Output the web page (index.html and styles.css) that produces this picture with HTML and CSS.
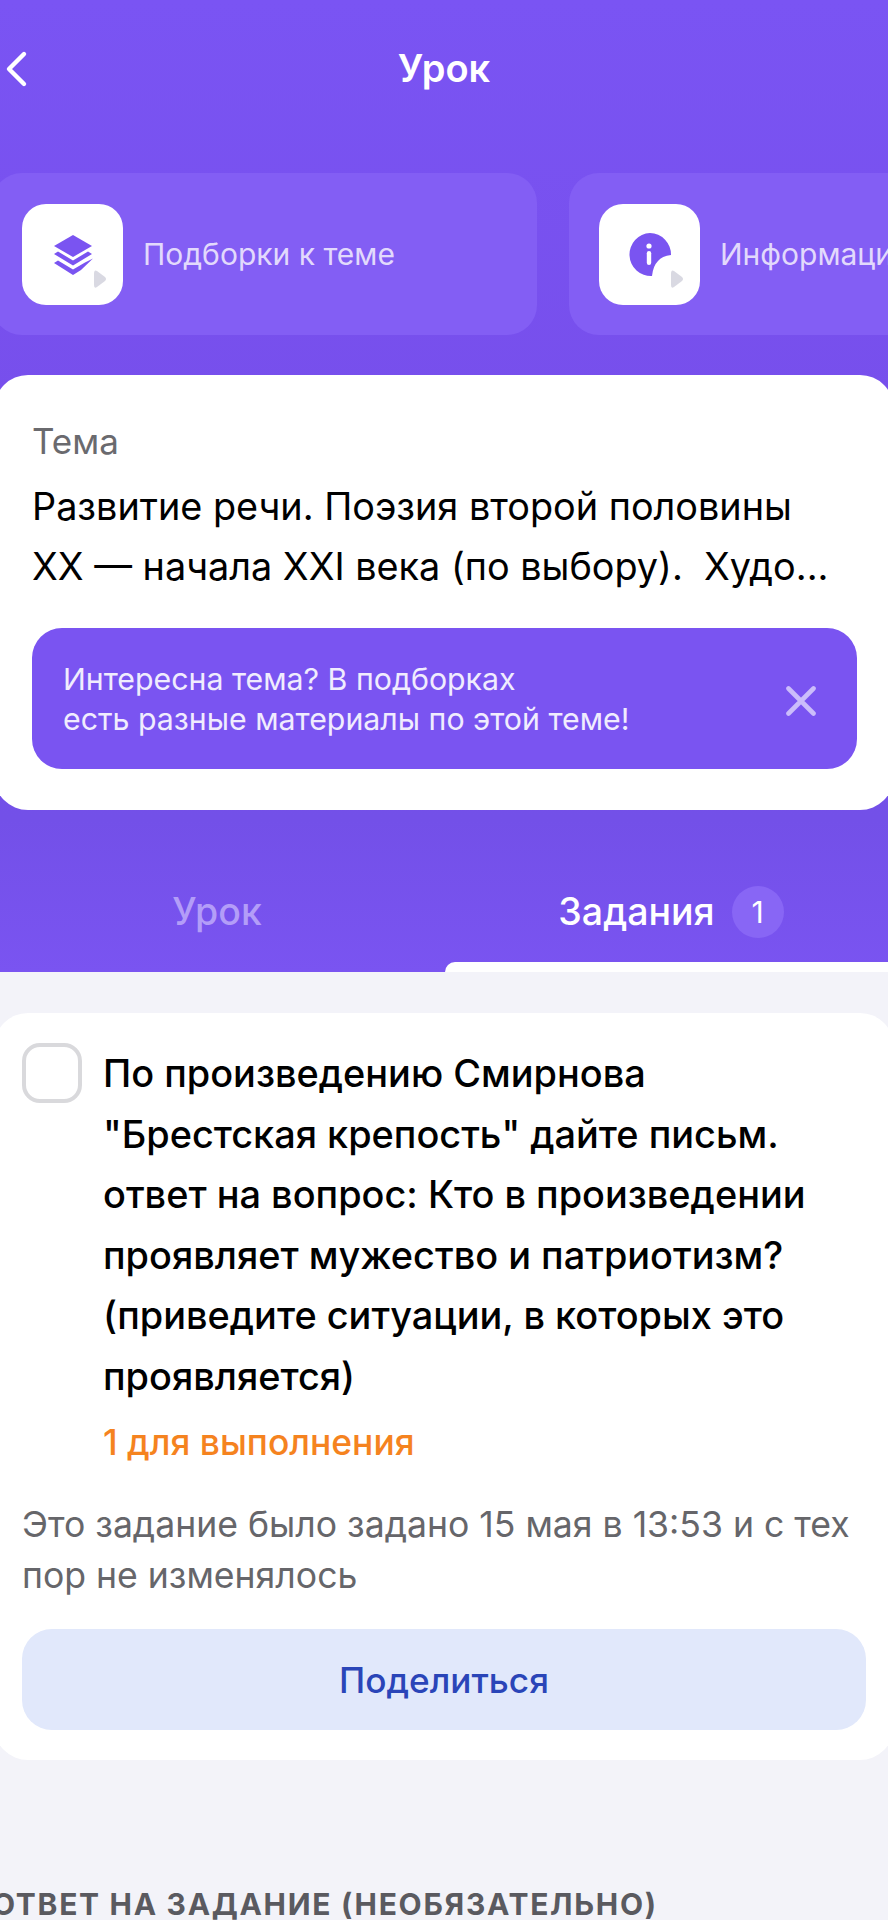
FILE: index.html
```html
<!DOCTYPE html>
<html lang="ru">
<head>
    <meta charset="UTF-8">
    <meta name="viewport" content="width=device-width, initial-scale=1.0">
    <title>Урок</title>
    <link rel="stylesheet" href="styles.css">
</head>
<body>
    <div class="screen">
        <div class="top">
            <header class="navbar">
                <svg class="back" viewBox="0 0 24 40" width="24" height="40">
                    <path d="M20 6 L5 21 L20 36" fill="none" stroke="#fff" stroke-width="4.400" stroke-linecap="round" stroke-linejoin="round"/>
                </svg>
                <div class="title">Урок</div>
            </header>

            <div class="shortcuts">
                <div class="shortcut shortcut-first">
                    <div class="tile">
                        <svg viewBox="0 0 100 100" width="100" height="100">
                            <path d="M51 31 L70 42 L51 53 L32 42 Z" fill="#7a54f1"/>
                            <path d="M32 50 L36 47.500 L51 56.500 L66 47.500 L70 50 L51 61.500 Z" fill="#7a54f1"/>
                            <path d="M32 59 L36 56.500 L51 65.500 L63 58.500 L71 54.500 L59 66 L51 71 Z" fill="#7a54f1"/>
                            <path d="M72 70 L72 81 Q72 85 75 83 L83 77 Q85 75 83 73 L75 67 Q72 65 72 70 Z" fill="#d9d9e2"/>
                        </svg>
                    </div>
                    <span class="shortcut-label">Подборки к теме</span>
                </div>
                <div class="shortcut">
                    <div class="tile">
                        <svg viewBox="0 0 100 100" width="100" height="100">
                            <path d="M51 29 A21.500 21.500 0 0 1 72 51 Q63 52 59 57 Q54 62 53 72 A21.500 21.500 0 1 1 51 29 Z" fill="#7a54f1"/>
                            <circle cx="50" cy="42" r="2.600" fill="#fff"/>
                            <rect x="47.800" y="47" width="4.400" height="14" rx="2.200" fill="#fff"/>
                            <path d="M72 70 L72 81 Q72 85 75 83 L83 77 Q85 75 83 73 L75 67 Q72 65 72 70 Z" fill="#d9d9e2"/>
                        </svg>
                    </div>
                    <span class="shortcut-label">Информация</span>
                </div>
            </div>

            <div class="topic">
                <div class="topic-label">Тема</div>
                <div class="topic-text">Развитие речи. Поэзия второй половины<br>XX — начала XXI века (по выбору).&nbsp; Худо...</div>
                <div class="hint">
                    <div class="hint-text">Интересна тема? В подборках<br>есть разные материалы по этой теме!</div>
                    <svg class="hint-close" viewBox="0 0 30 30" width="30" height="30">
                        <path d="M2.500 2.500 L27.500 27.500 M27.500 2.500 L2.500 27.500" fill="none" stroke="#cbbdfb" stroke-width="4.600" stroke-linecap="round"/>
                    </svg>
                </div>
            </div>

            <div class="tabs">
                <div class="tab tab-muted">Урок</div>
                <div class="tab tab-active">Задания <span class="tab-badge">1</span></div>
            </div>
        </div>

        <div class="task">
            <div class="task-main">
                <div class="checkbox"></div>
                <div class="task-body">
                    <div class="task-text">По произведению Смирнова<br>"Брестская крепость" дайте письм.<br>ответ на вопрос: Кто в произведении<br>проявляет мужество и патриотизм?<br>(приведите ситуации, в которых это<br>проявляется)</div>
                    <div class="task-count">1 для выполнения</div>
                </div>
            </div>
            <p class="task-note">Это задание было задано 15 мая в 13:53 и с тех<br>пор не изменялось</p>
            <button class="btn">Поделиться</button>
        </div>

        <h3 class="section-title">ОТВЕТ НА ЗАДАНИЕ (НЕОБЯЗАТЕЛЬНО)</h3>
    </div>
</body>
</html>
```

FILE: styles.css
```css
body {
    margin: 0;
    font-family: 'Inter', 'Noto Sans', sans-serif;
    background-color: #f3f3f9;
    color: #000;
}
.screen {
    height: 1920px;
    overflow: hidden;
}
.top {
    background: linear-gradient(#7a54f3 0, #774fec 400px, #7350e8 820px, #7a54f1 972px);
    height: 972px;
    overflow: hidden;
}
.navbar {
    height: 136px;
    padding: 0 0 0 4px;
    display: flex;
    align-items: center;
    position: relative;
}
.back {
    display: block;
}
.title {
    position: absolute;
    left: 0;
    right: 0;
    text-align: center;
    color: #fff;
    font-size: 38px;
    font-weight: 600;
}
.shortcuts {
    margin-top: 37px;
    margin-left: -8px;
    display: flex;
    gap: 32px;
}
.shortcut {
    flex: none;
    width: 545px;
    height: 162px;
    box-sizing: border-box;
    padding: 0 0 0 30px;
    display: flex;
    align-items: center;
    gap: 20px;
    background: #835ef4;
    border-radius: 30px;
}
.tile {
    flex: none;
    width: 101px;
    height: 101px;
    background: #fff;
    border-radius: 24px;
}
.tile svg {
    display: block;
}
.shortcut-label {
    color: #e2d9fc;
    font-size: 30px;
    white-space: nowrap;
}
.topic {
    margin: 40px -6px 0;
    height: 435px;
    box-sizing: border-box;
    padding: 46px 37px 0 38px;
    background: #fff;
    border-radius: 34px;
}
.topic-label {
    color: #6a6a6e;
    font-size: 35px;
    line-height: 40px;
}
.topic-text {
    margin-top: 15px;
    font-size: 37.800px;
    line-height: 60px;
    white-space: nowrap;
}
.hint {
    margin-top: 32px;
    height: 141px;
    box-sizing: border-box;
    padding: 0 41px 0 31px;
    display: flex;
    align-items: center;
    justify-content: space-between;
    background: #7a54f1;
    border-radius: 30px;
}
.hint-text {
    color: #f0ecfe;
    font-size: 30.300px;
    line-height: 40px;
}
.hint-close {
    margin-top: 5px;
}
.tabs {
    margin-top: 62px;
    display: flex;
    height: 100px;
}
.tab {
    width: 50%;
    height: 100px;
    box-sizing: border-box;
    display: flex;
    align-items: flex-start;
    justify-content: center;
    gap: 17px;
    padding-top: 14px;
    font-size: 37.500px;
    line-height: 52px;
    font-weight: 500;
    position: relative;
}
.tab-muted {
    padding-right: 10px;
    color: #b39df8;
}
.tab-active {
    padding-left: 10px;
    color: #fff;
}
.tab-active::after {
    content: "";
    position: absolute;
    left: 1px;
    right: 0;
    bottom: 0;
    height: 10px;
    background: #fff;
    border-top-left-radius: 10px;
}
.tab-badge {
    width: 52px;
    height: 52px;
    border-radius: 50%;
    background: #8866f5;
    font-size: 30px;
    font-weight: 400;
    text-align: center;
}
.task {
    margin: 41px -6px 0;
    height: 747px;
    box-sizing: border-box;
    padding: 30px 28px 0;
    background: #fff;
    border-radius: 34px;
}
.task-main {
    display: flex;
    gap: 22px;
}
.checkbox {
    flex: none;
    width: 60px;
    height: 60px;
    box-sizing: border-box;
    border: 4.500px solid #d9d9dc;
    border-radius: 18px;
}
.task-body {
    margin-left: -1px;
}
.task-text {
    font-size: 37.900px;
    font-weight: 500;
    line-height: 60.600px;
    white-space: nowrap;
}
.task-count {
    margin-top: 12px;
    color: #f5831f;
    font-size: 35.400px;
    font-weight: 500;
    line-height: 48px;
}
.task-note {
    margin: 32px 0 0;
    color: #66666a;
    font-size: 35.600px;
    line-height: 51px;
    white-space: nowrap;
}
.btn {
    display: block;
    width: 100%;
    height: 101px;
    margin-top: 28px;
    padding: 2px 0 0;
    background-color: #e1e8fb;
    color: #2a45b8;
    border: none;
    border-radius: 30px;
    font-family: inherit;
    font-size: 35.200px;
    font-weight: 500;
}
.section-title {
    margin: 124px 0 0 -8px;
    color: #5a5a60;
    font-size: 30px;
    font-weight: 700;
    letter-spacing: 1.700px;
    line-height: 40px;
    white-space: nowrap;
}
```
